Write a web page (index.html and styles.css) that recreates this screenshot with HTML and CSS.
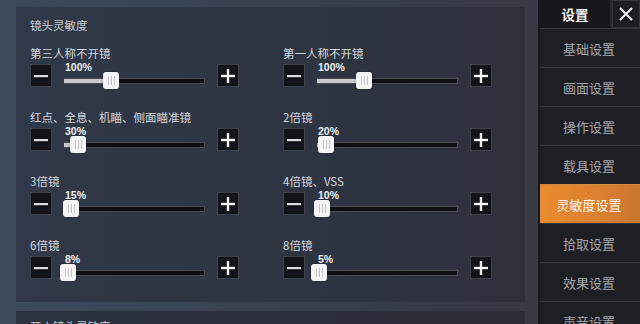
FILE: index.html
```html
<!DOCTYPE html>
<html lang="zh-CN">
<head>
<meta charset="utf-8">
<title>设置</title>
<link rel="stylesheet" href="styles.css">
</head>
<body>
<div class="app">
  <main class="main">
    <section class="panel">
      <div class="panel-title">镜头灵敏度</div>
      <div class="grid">
        <div class="cell">
          <div class="label">第三人称不开镜</div>
          <div class="ctrl">
            <span class="btn"><svg width="14" height="14" viewBox="0 0 14 14"><rect x="0" y="6" width="14" height="2.2" fill="#dcdce0"/></svg></span>
            <div class="slider"><span class="pct">100%</span><span class="track"></span><span class="fill" style="width:47px"></span><span class="thumb" style="left:39px"></span></div>
            <span class="btn"><svg width="14" height="14" viewBox="0 0 14 14"><rect x="0" y="5.8" width="14" height="2.4" fill="#f2f2f4"/><rect x="5.8" y="0" width="2.4" height="14" fill="#f2f2f4"/></svg></span>
          </div>
        </div>
        <div class="cell">
          <div class="label">第一人称不开镜</div>
          <div class="ctrl">
            <span class="btn"><svg width="14" height="14" viewBox="0 0 14 14"><rect x="0" y="6" width="14" height="2.2" fill="#dcdce0"/></svg></span>
            <div class="slider"><span class="pct">100%</span><span class="track"></span><span class="fill" style="width:47px"></span><span class="thumb" style="left:39px"></span></div>
            <span class="btn"><svg width="14" height="14" viewBox="0 0 14 14"><rect x="0" y="5.8" width="14" height="2.4" fill="#f2f2f4"/><rect x="5.8" y="0" width="2.4" height="14" fill="#f2f2f4"/></svg></span>
          </div>
        </div>
        <div class="cell">
          <div class="label">红点、全息、机瞄、侧面瞄准镜</div>
          <div class="ctrl">
            <span class="btn"><svg width="14" height="14" viewBox="0 0 14 14"><rect x="0" y="6" width="14" height="2.2" fill="#dcdce0"/></svg></span>
            <div class="slider"><span class="pct">30%</span><span class="track"></span><span class="fill" style="width:14px"></span><span class="thumb" style="left:6px"></span></div>
            <span class="btn"><svg width="14" height="14" viewBox="0 0 14 14"><rect x="0" y="5.8" width="14" height="2.4" fill="#f2f2f4"/><rect x="5.8" y="0" width="2.4" height="14" fill="#f2f2f4"/></svg></span>
          </div>
        </div>
        <div class="cell">
          <div class="label">2倍镜</div>
          <div class="ctrl">
            <span class="btn"><svg width="14" height="14" viewBox="0 0 14 14"><rect x="0" y="6" width="14" height="2.2" fill="#dcdce0"/></svg></span>
            <div class="slider"><span class="pct">20%</span><span class="track"></span><span class="fill" style="width:9px"></span><span class="thumb" style="left:1px"></span></div>
            <span class="btn"><svg width="14" height="14" viewBox="0 0 14 14"><rect x="0" y="5.8" width="14" height="2.4" fill="#f2f2f4"/><rect x="5.8" y="0" width="2.4" height="14" fill="#f2f2f4"/></svg></span>
          </div>
        </div>
        <div class="cell">
          <div class="label">3倍镜</div>
          <div class="ctrl">
            <span class="btn"><svg width="14" height="14" viewBox="0 0 14 14"><rect x="0" y="6" width="14" height="2.2" fill="#dcdce0"/></svg></span>
            <div class="slider"><span class="pct">15%</span><span class="track"></span><span class="fill" style="width:7px"></span><span class="thumb" style="left:-1px"></span></div>
            <span class="btn"><svg width="14" height="14" viewBox="0 0 14 14"><rect x="0" y="5.8" width="14" height="2.4" fill="#f2f2f4"/><rect x="5.8" y="0" width="2.4" height="14" fill="#f2f2f4"/></svg></span>
          </div>
        </div>
        <div class="cell">
          <div class="label">4倍镜、VSS</div>
          <div class="ctrl">
            <span class="btn"><svg width="14" height="14" viewBox="0 0 14 14"><rect x="0" y="6" width="14" height="2.2" fill="#dcdce0"/></svg></span>
            <div class="slider"><span class="pct">10%</span><span class="track"></span><span class="fill" style="width:5px"></span><span class="thumb" style="left:-3px"></span></div>
            <span class="btn"><svg width="14" height="14" viewBox="0 0 14 14"><rect x="0" y="5.8" width="14" height="2.4" fill="#f2f2f4"/><rect x="5.8" y="0" width="2.4" height="14" fill="#f2f2f4"/></svg></span>
          </div>
        </div>
        <div class="cell">
          <div class="label">6倍镜</div>
          <div class="ctrl">
            <span class="btn"><svg width="14" height="14" viewBox="0 0 14 14"><rect x="0" y="6" width="14" height="2.2" fill="#dcdce0"/></svg></span>
            <div class="slider"><span class="pct">8%</span><span class="track"></span><span class="fill" style="width:4px"></span><span class="thumb" style="left:-4px"></span></div>
            <span class="btn"><svg width="14" height="14" viewBox="0 0 14 14"><rect x="0" y="5.8" width="14" height="2.4" fill="#f2f2f4"/><rect x="5.8" y="0" width="2.4" height="14" fill="#f2f2f4"/></svg></span>
          </div>
        </div>
        <div class="cell">
          <div class="label">8倍镜</div>
          <div class="ctrl">
            <span class="btn"><svg width="14" height="14" viewBox="0 0 14 14"><rect x="0" y="6" width="14" height="2.2" fill="#dcdce0"/></svg></span>
            <div class="slider"><span class="pct">5%</span><span class="track"></span><span class="fill" style="width:2px"></span><span class="thumb" style="left:-6px"></span></div>
            <span class="btn"><svg width="14" height="14" viewBox="0 0 14 14"><rect x="0" y="5.8" width="14" height="2.4" fill="#f2f2f4"/><rect x="5.8" y="0" width="2.4" height="14" fill="#f2f2f4"/></svg></span>
          </div>
        </div>
      </div>
    </section>
    <section class="panel panel-next">
      <div class="panel-title">开火镜头灵敏度</div>
    </section>
  </main>
  <aside class="side">
    <div class="side-head">
      <div class="side-title">设置</div>
      <div class="side-close"><svg width="14" height="14" viewBox="0 0 14 14"><path d="M1 1L13 13M13 1L1 13" stroke="#f0f0f2" stroke-width="2.2" fill="none"/></svg></div>
    </div>
    <div class="side-item">基础设置</div>
    <div class="side-item">画面设置</div>
    <div class="side-item">操作设置</div>
    <div class="side-item">载具设置</div>
    <div class="side-item active">灵敏度设置</div>
    <div class="side-item">拾取设置</div>
    <div class="side-item">效果设置</div>
    <div class="side-item">声音设置</div>
  </aside>
</div>
</body>
</html>
```
FILE: styles.css
```css
* { box-sizing: border-box; }
html, body { margin: 0; padding: 0; }
body {
  width: 640px;
  height: 324px;
  overflow: hidden;
  font-family: "Noto Sans CJK SC", "Noto Sans", sans-serif;
  background: linear-gradient(90deg, #3d4a5c 0%, #394454 30%, #373a47 70%, #3b3a46 100%);
}
.app {
  display: flex;
  height: 324px;
}
.main {
  width: 538px;
  padding: 7px 13px 0 16px;
  display: flex;
  flex-direction: column;
  gap: 9px;
  overflow: hidden;
}
.panel {
  background: linear-gradient(90deg, #303949 0%, #2e3543 45%, #2e303c 100%);
  padding: 10px 0 0 14px;
  height: 295px;
  flex: none;
}
.panel-next {
  height: 40px;
  padding-top: 7px;
  background: linear-gradient(90deg, #2b313e 0%, #2b2d38 100%);
}
.panel-title {
  font-size: 11.5px;
  line-height: 16px;
  color: #c9ced6;
  height: 16px;
}
.grid {
  margin-top: 12px;
  display: grid;
  grid-template-columns: 253px 210px;
  row-gap: 22px;
}
.label {
  font-size: 11.5px;
  line-height: 16px;
  height: 16px;
  color: #d3d7de;
  white-space: nowrap;
}
.ctrl {
  margin-top: 3px;
  display: flex;
  align-items: center;
  height: 23px;
}
.btn {
  width: 22px;
  height: 23px;
  background: #121419;
  border: 1px solid #3e424b;
  display: flex;
  align-items: center;
  justify-content: center;
  flex: none;
}
.slider {
  position: relative;
  width: 141px;
  height: 23px;
  margin: 0 12px 0 12px;
  flex: none;
}
.pct {
  position: absolute;
  left: 1px;
  top: -3px;
  font-family: "Liberation Sans", Arial, sans-serif;
  font-weight: bold;
  font-size: 10.5px;
  line-height: 12px;
  color: #eef0f2;
}
.track {
  position: absolute;
  left: 0;
  right: 0;
  top: 14px;
  height: 6px;
  background: #0c0e13;
  border: 1px solid #4a4d55;
  border-left: none;
}
.fill {
  position: absolute;
  left: 0;
  top: 15px;
  height: 4px;
  background: #c9cacd;
}
.thumb {
  position: absolute;
  top: 8px;
  width: 16px;
  height: 17px;
  background: #f4f4f4;
  border-radius: 3px;
  box-shadow: 0 0 2px rgba(0,0,0,0.5);
  background-image: linear-gradient(90deg, transparent 5px, #c4c4c6 5px, #c4c4c6 6px, transparent 6px, transparent 8px, #c4c4c6 8px, #c4c4c6 9px, transparent 9px, transparent 11px, #c4c4c6 11px, #c4c4c6 12px, transparent 12px);
  background-size: 100% 9px;
  background-position: 0 4px;
  background-repeat: no-repeat;
}
.side {
  width: 102px;
  background: #1e1f25;
  border-left: 2px solid #18191e;
  display: flex;
  flex-direction: column;
}
.side-head {
  display: flex;
  height: 28px;
  gap: 2px;
  flex: none;
  background: #26272d;
}
.side-title {
  width: 70px;
  background: #17181c;
  color: #f2f2f4;
  font-size: 13.5px;
  font-weight: bold;
  display: flex;
  align-items: center;
  justify-content: center;
}
.side-close {
  flex: 1;
  background: #1c1d22;
  border: 1px solid #33343a;
  display: flex;
  align-items: center;
  justify-content: center;
}
.side-item {
  height: 39px;
  flex: none;
  border-top: 1px solid #36373e;
  color: #a4a5ab;
  font-size: 13px;
  display: flex;
  align-items: center;
  justify-content: center;
  padding-right: 2px;
}
.side-item.active {
  background: linear-gradient(90deg, #ea8c2e 0%, #dc8032 55%, #c9772f 100%);
  color: #fff7ee;
  border-top-color: #d88a3a;
}
```
